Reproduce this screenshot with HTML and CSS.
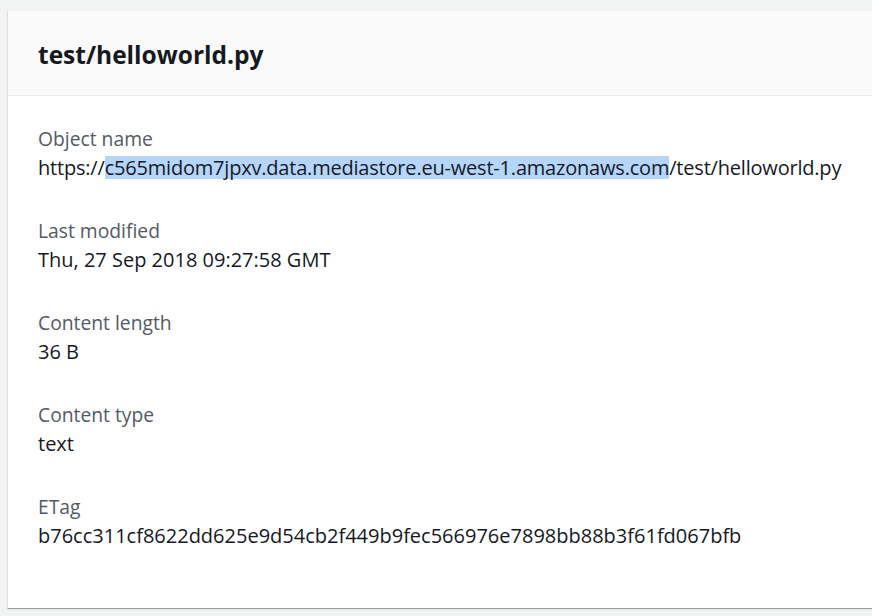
FILE: index.html
```html
<!DOCTYPE html>
<html>
<head>
<meta charset="utf-8">
<link rel="stylesheet" href="styles.css">
</head>
<body>
<div class="page">
  <div class="card">
    <div class="card-header"><h2 class="title">test/helloworld.py</h2></div>
    <div class="card-body">
      <div class="field">
        <div class="label">Object name</div>
        <div class="value url">https://<span class="sel">c565midom7jpxv.data.mediastore.eu-west-1.amazonaws.com</span>/test/helloworld.py</div>
      </div>
      <div class="field">
        <div class="label">Last modified</div>
        <div class="value">Thu, 27 Sep 2018 09:27:58 GMT</div>
      </div>
      <div class="field">
        <div class="label">Content length</div>
        <div class="value">36 B</div>
      </div>
      <div class="field">
        <div class="label">Content type</div>
        <div class="value">text</div>
      </div>
      <div class="field">
        <div class="label">ETag</div>
        <div class="value">b76cc311cf8622dd625e9d54cb2f449b9fec566976e7898bb88b3f61fd067bfb</div>
      </div>
    </div>
  </div>
</div>
</body>
</html>
```
FILE: styles.css
```css
html, body {
  margin: 0;
  padding: 0;
  background: #f2f3f3;
  font-family: "Open Sans", "Liberation Sans", sans-serif;
  overflow: hidden;
}
.page {
  padding: 11px 0 0 7px;
  height: 616px;
  box-sizing: border-box;
}
.card {
  background: #ffffff;
  border-left: 1px solid #dcdfdf;
  box-shadow: 0 2px 1px -1px rgba(0,0,0,0.28), 0 1px 1px 0 rgba(0,0,0,0.1);
  margin-right: -10px;
  height: 597px;
  box-sizing: border-box;
}
.card-header {
  background: #fafafa;
  border-bottom: 1px solid #eaeded;
  height: 85px;
  box-sizing: border-box;
  display: flex;
  align-items: center;
  padding-left: 30px;
}
.title {
  margin: 0;
  font-size: 24.5px;
  font-weight: 700;
  color: #16191f;
  padding-top: 3px;
}
.card-body {
  padding: 28px 0 0 30px;
  display: flex;
  flex-direction: column;
  gap: 34px;
}
.label {
  font-size: 19.3px;
  line-height: 29px;
  color: #545b64;
}
.value {
  font-size: 20px;
  line-height: 29px;
  color: #16191f;
  white-space: nowrap;
}
.url {
  letter-spacing: -0.2px;
}
.sel {
  background: linear-gradient(transparent 2px, #b5d5fb 2px, #b5d5fb calc(100% - 2px), transparent calc(100% - 2px));
}
```
